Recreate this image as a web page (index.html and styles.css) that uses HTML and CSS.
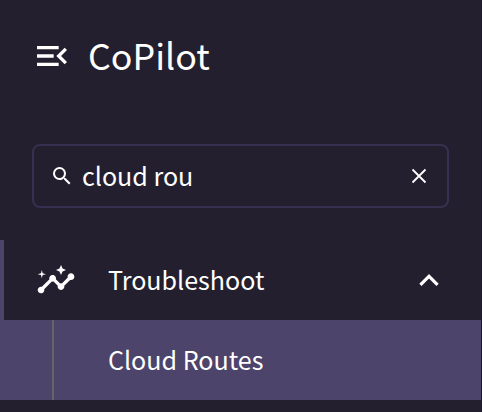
FILE: index.html
```html
<!DOCTYPE html>
<html lang="en">
<head>
<meta charset="utf-8">
<title>CoPilot</title>
<link rel="stylesheet" href="styles.css">
</head>
<body>
<aside class="sidebar">
  <header class="brand">
    <svg class="menu-icon" viewBox="3 6 18 12" fill="currentColor"><path d="M3 18h13v-2H3v2zM3 13h10v-2H3v2zm0-7v2h13V6H3zm18 9.59L17.42 12 21 8.41 19.59 7l-5 5 5 5L21 15.59z"/></svg>
    <h1 class="brand-name">CoPilot</h1>
  </header>
  <div class="search">
    <svg class="search-icon" viewBox="0 0 24 24" fill="currentColor"><path d="M15.5 14h-.79l-.28-.27A6.47 6.47 0 0 0 16 9.5 6.5 6.5 0 1 0 9.5 16c1.61 0 3.09-.59 4.23-1.57l.27.28v.79l5 4.99L20.49 19l-4.99-5zm-6 0C7.01 14 5 11.99 5 9.5S7.01 5 9.5 5 14 7.01 14 9.5 11.99 14 9.5 14z"/></svg>
    <span class="query">cloud rou</span>
    <svg class="clear-icon" viewBox="0 0 24 24" fill="none" stroke="currentColor" stroke-width="1.8"><path d="M5.5 5.5l13 13M18.5 5.5l-13 13"/></svg>
  </div>
  <nav>
    <div class="group">
      <svg class="group-icon" viewBox="0 0 24 24" fill="currentColor"><path d="M21 8c-1.45 0-2.26 1.44-1.93 2.51l-3.55 3.56c-.3-.09-.74-.09-1.04 0l-2.55-2.55C12.27 10.45 11.46 9 10 9c-1.45 0-2.27 1.44-1.93 2.52l-4.56 4.55C2.44 15.74 1 16.55 1 18c0 1.1.9 2 2 2 1.45 0 2.26-1.44 1.93-2.51l4.55-4.56c.3.09.74.09 1.04 0l2.55 2.55C12.73 16.55 13.54 18 15 18c1.45 0 2.27-1.44 1.93-2.52l3.56-3.55C21.56 12.26 23 11.45 23 10c0-1.1-.9-2-2-2z"/><path d="M15 9l.94-2.07L18 6l-2.06-.93L15 3l-.92 2.07L12 6l2.08.93zM3.5 11L4 9l2-.5L4 8l-.5-2L3 8l-2 .5L3 9z"/></svg>
      <span class="group-name">Troubleshoot</span>
      <svg class="chevron" viewBox="6 8 12 7.41" fill="currentColor"><path d="M12 8l-6 6 1.41 1.41L12 10.83l4.59 4.58L18 14z"/></svg>
    </div>
    <a class="item"><span class="item-name">Cloud Routes</span></a>
  </nav>
</aside>
</body>
</html>
```
FILE: styles.css
```css
* { box-sizing: border-box; }
body { margin: 0; background: #231f2f; color: #fff; font-family: "Noto Sans CJK SC", "Noto Sans", sans-serif; }
svg { display: block; flex: none; }
.sidebar { height: 412px; overflow: hidden; border-right: 1px solid #1b1728; }
.brand { display: flex; align-items: center; height: 112px; padding-left: 37px; }
.menu-icon { width: 30px; height: 20px; }
.brand-name { margin: 0 0 4px 21px; font-size: 35.8px; font-weight: 400; line-height: 56px; }
.search { display: flex; align-items: center; width: 417px; height: 64px; margin: 32px 0 0 32px; padding: 0 16px; border: 2px solid #373050; border-radius: 8px; }
.search-icon { width: 24px; height: 24px; }
.query { flex: 1; margin: 0 0 2px 8px; font-size: 25.07px; line-height: 40px; }
.clear-icon { width: 24px; height: 24px; }
.group { display: flex; align-items: center; height: 80px; margin-top: 32px; padding: 0 42px 0 32px; border-left: 4px solid #4c446b; }
.group-icon { width: 40px; height: 40px; }
.group-name { flex: 1; margin: 0 0 2px 32px; font-size: 25.07px; line-height: 40px; }
.chevron { width: 20px; height: 12px; }
.item { display: flex; height: 80px; padding-left: 52px; background: #4c446b; }
.item-name { display: flex; align-items: center; padding: 0 0 2px 54px; border-left: 2px solid #676469; font-size: 25.07px; line-height: 40px; }
```
